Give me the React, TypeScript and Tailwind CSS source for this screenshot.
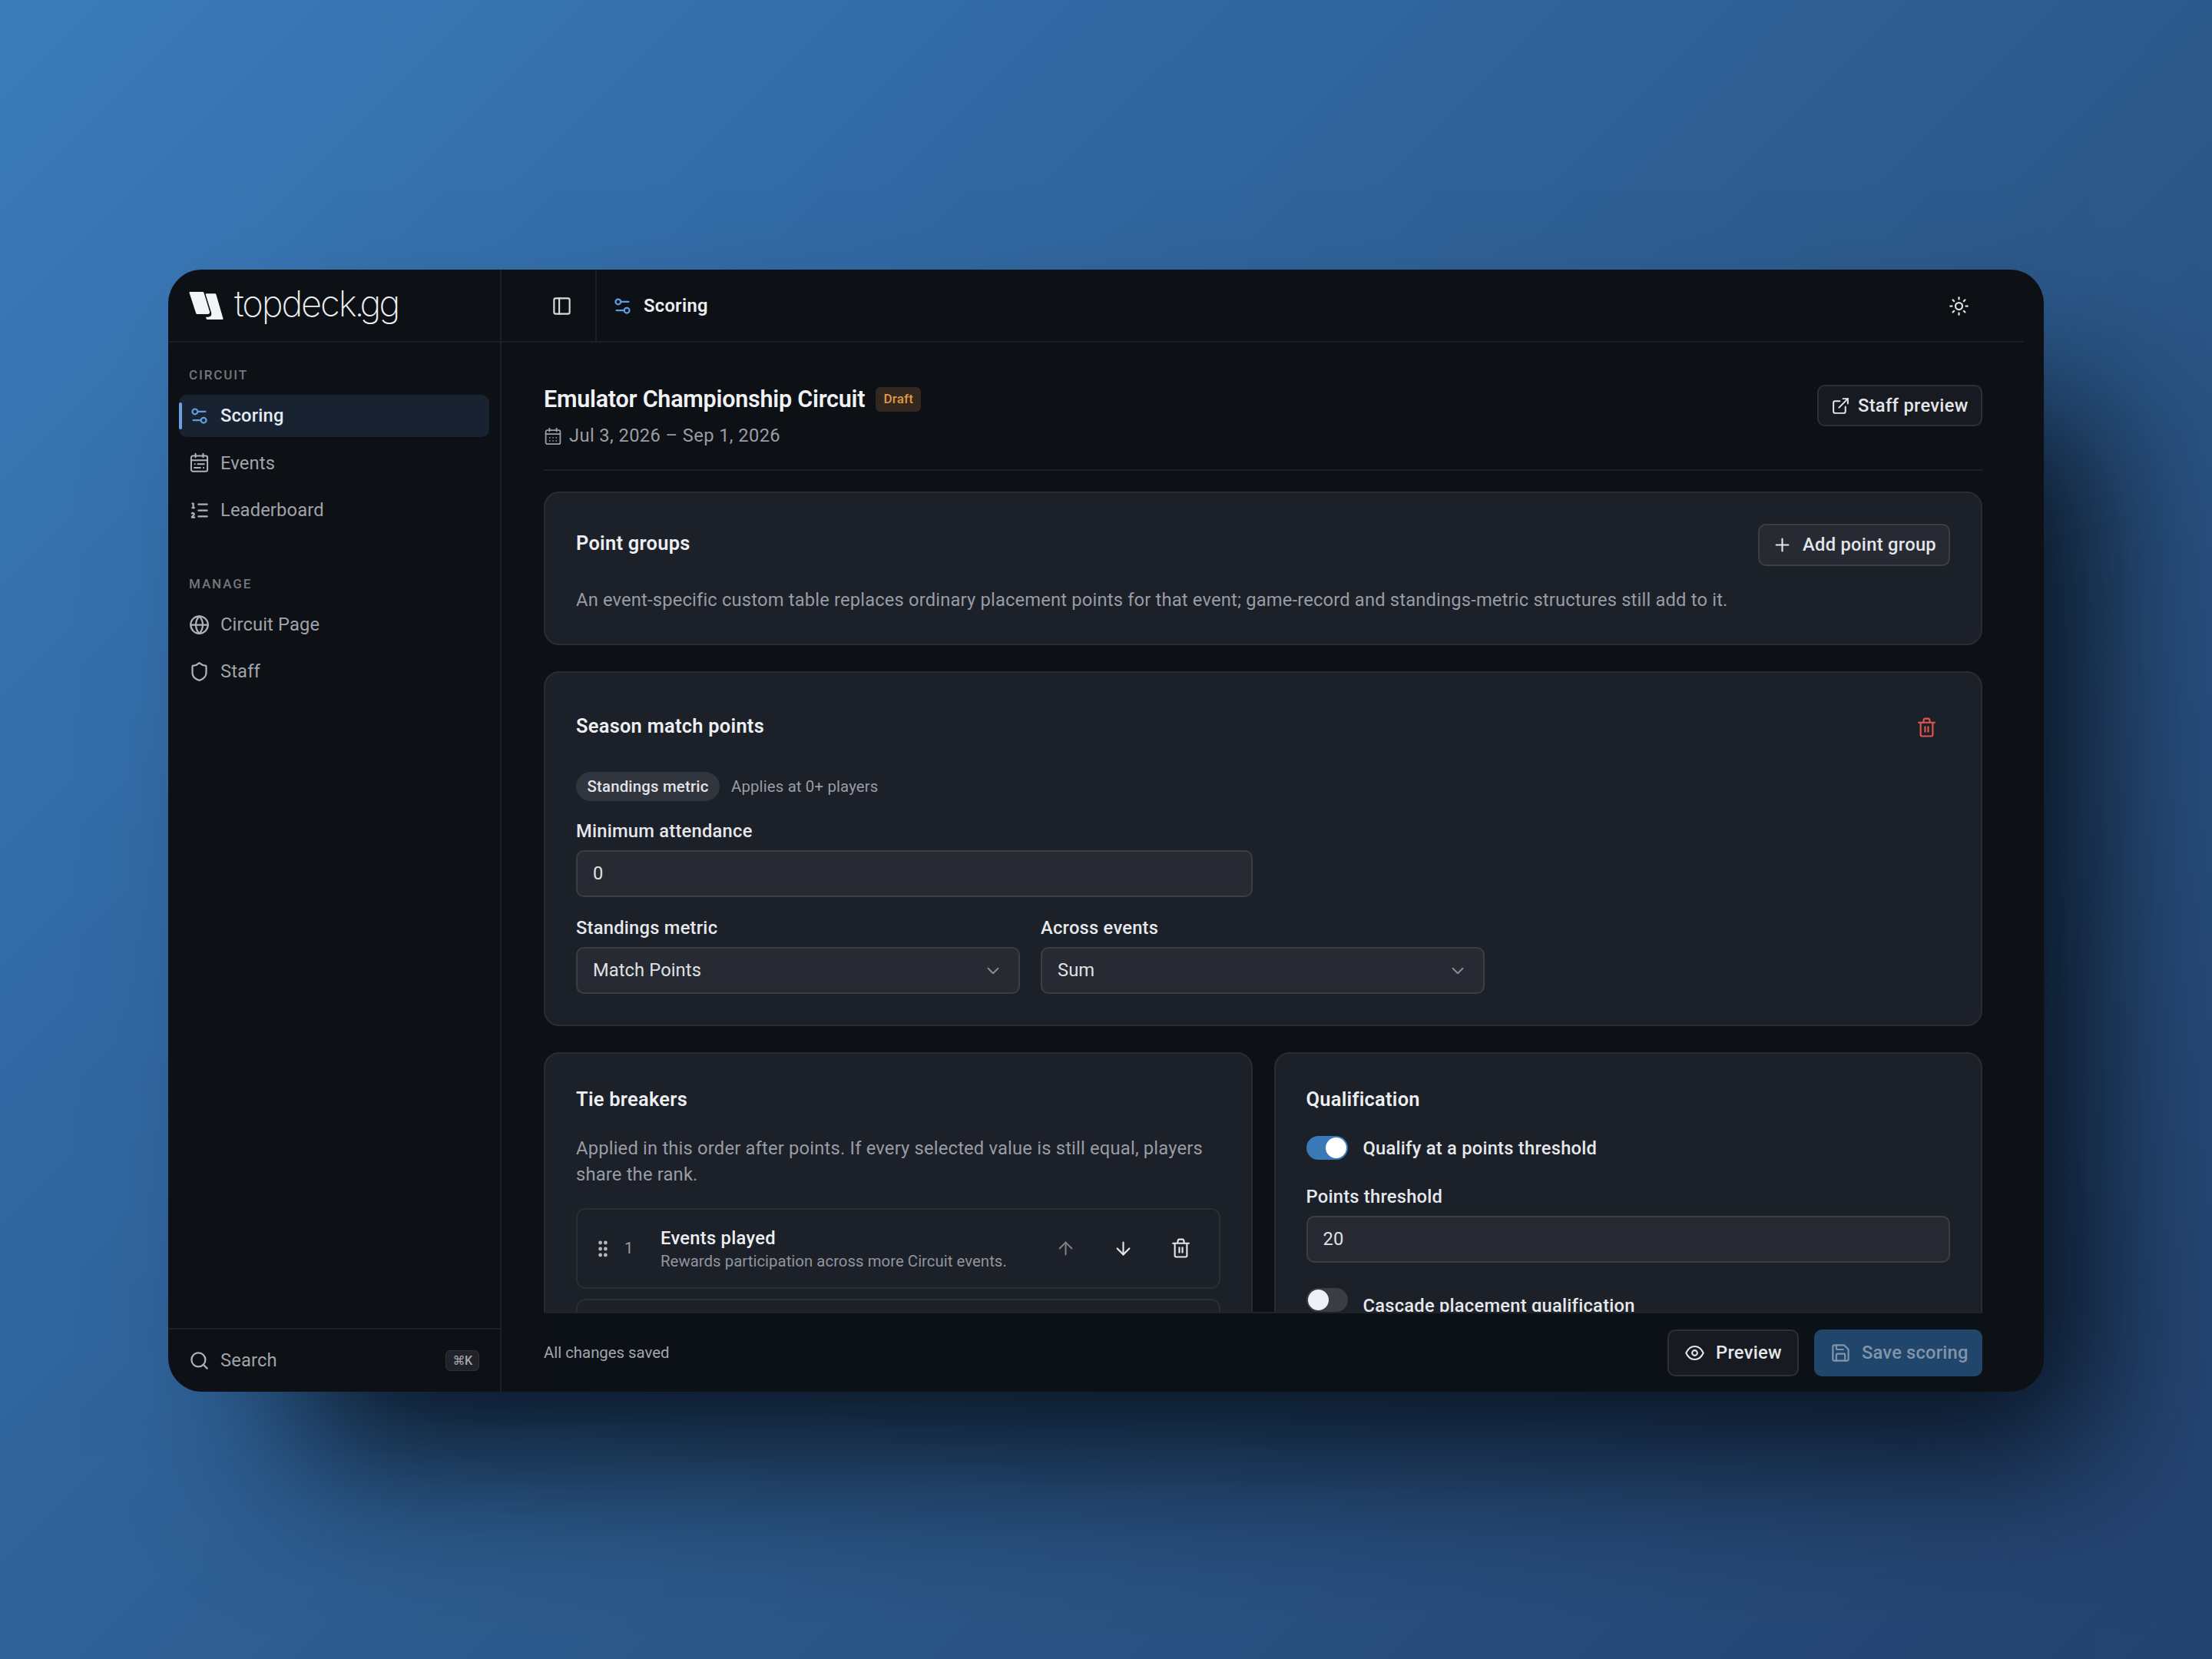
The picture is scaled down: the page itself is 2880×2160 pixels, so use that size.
import type { ReactNode } from "react";
import {
  ArrowDown, ArrowUp, ChevronDown, ExternalLink, Globe, ListOrdered,
  PanelLeft, Plus, Save, Search, Settings2, Shield, Sun,
} from "lucide-react";

type IconProps = { size?: number; className?: string };

/* Icons that lucide draws differently */
const TrashIcon = ({ size = 27, className }: IconProps) => (
  <svg width={size} height={size} viewBox="0 0 24 24" fill="none" stroke="currentColor" strokeWidth={1.9} strokeLinejoin="round" className={className}>
    <path d="M2 6h20M5 6v14.3a1.5 1.5 0 0 0 1.5 1.5h11a1.5 1.5 0 0 0 1.5-1.5V6M8.2 6l.4-3.2A1.5 1.5 0 0 1 10 1.5h4a1.5 1.5 0 0 1 1.4 1.3l.4 3.2M10.2 10.2v7.2M13.8 10.2v7.2" />
  </svg>
);

const EventsIcon = ({ size = 27, className }: IconProps) => (
  <svg width={size} height={size} viewBox="0 0 24 24" fill="none" stroke="currentColor" strokeWidth={1.8} strokeLinecap="round" className={className}>
    <rect x="2.6" y="4" width="18.8" height="18" rx="2" />
    <path d="M7.6 1.6v4M16.4 1.6v4M2.6 9.2h18.8M6.8 13.6h.1M10.2 13.6h7.4M6.2 17.8h7M16.8 17.8h.2" />
  </svg>
);

const CalendarIcon = ({ size = 24, className }: IconProps) => (
  <svg width={size} height={size} viewBox="0 0 24 24" fill="none" stroke="currentColor" strokeWidth={1.8} strokeLinecap="round" className={className}>
    <rect x="2.6" y="4.2" width="18.8" height="18" rx="2" />
    <path d="M7.4 1.6v4M16.6 1.6v4M2.6 9.2h18.8M7.8 13.8h.1M12 13.8h.1M16.2 13.8h.1M7.8 17.8h.1M12 17.8h.1M16.2 17.8h.1" />
  </svg>
);

const EyeIcon = ({ size = 27, className }: IconProps) => (
  <svg width={size} height={size} viewBox="0 0 24 24" fill="none" stroke="currentColor" strokeWidth={1.8} strokeLinejoin="round" className={className}>
    <path d="M2 12C4.2 7.2 7.8 4.4 12 4.4s7.8 2.8 10 7.6c-2.2 4.8-5.8 7.6-10 7.6S4.2 16.8 2 12Z" />
    <circle cx="12" cy="12" r="3" />
  </svg>
);

const GripIcon = () => (
  <svg width="14" height="24" viewBox="0 0 14 24" fill="currentColor">
    {[4, 12, 20].map(y => (
      <g key={y}>
        <circle cx="3.6" cy={y} r="2.4" />
        <circle cx="10.4" cy={y} r="2.4" />
      </g>
    ))}
  </svg>
);

const LogoMark = () => (
  <svg width="45" height="36" viewBox="42 45 134 108" fill="#f3f4f6">
    <path d="M45 45h50q4 0 5 4l22 72q3 10-6 11H74q-4 0-5-4L43 49q-1-4 2-4Z" />
    <path d="M109 52h34q4 0 5 4l27 93q1 4-3 4h-58q-4 0-5-4l-1-6h10q14-2 11-16l-22-71q-1-4 2-4Z" />
  </svg>
);

const NAV = [
  {
    section: "CIRCUIT",
    items: [
      { label: "Scoring", icon: Settings2, active: true },
      { label: "Events", icon: EventsIcon },
      { label: "Leaderboard", icon: ListOrdered },
    ],
  },
  {
    section: "MANAGE",
    items: [
      { label: "Circuit Page", icon: Globe },
      { label: "Staff", icon: Shield },
    ],
  },
];

function Sidebar() {
  return (
    <aside className="flex w-[434px] shrink-0 flex-col border-r-2 border-[#1d2126]">
      <div className="flex h-[95px] shrink-0 items-start gap-[14px] border-b-2 border-[#1b1f24] pl-[27px] pt-[29px]">
        <LogoMark />
        <div className="-mt-[13px] flex font-['Inter'] text-[47px] font-extralight leading-[56px] text-[#eceef1]">
          <span className="tracking-[-2.1px]">topdeck</span>
          <span className="-ml-px -mr-[6px]">.</span>
          <span className="tracking-[-2.8px]">gg</span>
        </div>
      </div>

      <nav className="flex flex-1 flex-col pl-[14px] pr-[14px] pt-[31px]">
        {NAV.map(({ section, items }) => (
          <div key={section} className="mb-[57px]">
            <div className="mb-[14px] pl-[13px] text-[17px] font-medium leading-[23px] tracking-[1.9px] text-[#74777d]">{section}</div>
            <div className="flex flex-col gap-[6.3px]">
              {items.map(item => {
                const Icon = item.icon;
                const active = "active" in item;
                return (
                  <div
                    key={item.label}
                    className={`relative flex h-[55px] items-center gap-[14px] rounded-[10px] pl-[13px] text-[23.7px] ${
                      active ? "bg-[#182230] font-medium tracking-[0.2px] text-[#e4ebf5]" : "tracking-[0.15px] text-[#a0a3a9]"
                    }`}
                  >
                    {active && <span className="absolute left-0 top-[10px] h-[35px] w-[3.5px] rounded-full bg-[#65a1e8]" />}
                    <Icon size={27} className={active ? "text-[#5f9ce2]" : "text-[#b0b2b8]"} />
                    <span className="pt-px">{item.label}</span>
                  </div>
                );
              })}
            </div>
          </div>
        ))}
      </nav>

      <div className="flex h-[83px] shrink-0 items-center gap-[14px] border-t-2 border-[#1d2126] pl-[27px] pr-[27px] text-[23.7px] tracking-[0.15px] text-[#a0a3a9]">
        <Search size={27} className="text-[#b0b2b8]" />
        <span className="flex-1 pt-px">Search</span>
        <kbd className="flex h-[27px] w-[44px] items-center justify-center rounded-[6px] border border-[#2e3238] bg-[#20242a] font-['Roboto','DejaVu_Sans',sans-serif] text-[16px] font-medium tracking-[-0.6px] text-[#a5a7ad]">⌘K</kbd>
      </div>
    </aside>
  );
}

function Card({ className = "", children }: { className?: string; children: ReactNode }) {
  return (
    <section className={`flex flex-col rounded-[20px] border-2 border-[#292d33] bg-[#1c2028] px-[40px] ${className}`}>
      {children}
    </section>
  );
}

function CardTitle({ className = "", children }: { className?: string; children: ReactNode }) {
  return <h2 className={`text-[25.4px] font-semibold leading-[34px] tracking-[0.28px] text-[#eceef1] ${className}`}>{children}</h2>;
}

function FieldLabel({ children }: { children: ReactNode }) {
  return <label className="text-[23.7px] font-medium leading-[34px] tracking-[0.25px] text-[#e6e8ec]">{children}</label>;
}

function Field({ value, select = false }: { value: string; select?: boolean }) {
  return (
    <div className="mt-[8px] flex h-[61px] items-center justify-between rounded-[10px] border-2 border-[#3a3e45] bg-[#272a32] px-[20px] text-[23.7px] tracking-[0.1px] text-[#dfe1e5]">
      <span className="pt-px">{value}</span>
      {select && <ChevronDown size={26} strokeWidth={1.7} className="text-[#8b8f97]" />}
    </div>
  );
}

function Toggle({ on = false }: { on?: boolean }) {
  return (
    <span className={`flex h-[31px] w-[54px] shrink-0 items-center rounded-full px-[2px] ${on ? "justify-end bg-[#3a79b8]" : "bg-[#3a3d43]"}`}>
      <span className={`size-[27px] rounded-full ${on ? "bg-white" : "bg-[#eef1f8]"}`} />
    </span>
  );
}

export default function App() {
  return (
    <div className="flex h-[2160px] w-[2880px] overflow-hidden bg-[linear-gradient(135deg,#3b7cba_0%,#3269a4_28%,#2d5b8d_55%,#24426f_100%)] pl-[219px] pt-[351px] font-['Roboto','Liberation_Sans',sans-serif]">
      <div className="flex h-[1461px] w-[2442px] overflow-hidden rounded-[44px] bg-[#0d1015] shadow-[115px_130px_190px_-50px_rgba(4,11,20,0.92)]">
        <Sidebar />

        <main className="flex min-w-0 flex-1 flex-col">
          <header className="mr-[27px] flex h-[95px] shrink-0 items-center border-b-2 border-[#1b1f24] pl-[54px] pr-[70px]">
            <div className="flex size-[48px] items-center justify-center pt-[2px] text-[#d9dbdf]">
              <PanelLeft size={27} strokeWidth={1.9} />
            </div>
            <div className="ml-[20px] h-full w-[2px] bg-[#1d2126]" />
            <div className="flex flex-1 items-center gap-[14px] pl-[20px] pt-[2px]">
              <Settings2 size={27} className="text-[#5f9ce2]" />
              <span className="flex-1 text-[23.7px] font-semibold tracking-[0.3px] text-[#eceef1]">Scoring</span>
              <Sun size={27} className="text-[#dcdee2]" />
            </div>
          </header>

          <div className="flex min-h-0 flex-1 flex-col overflow-hidden pl-[55px] pr-[80px] pt-[54px]">
            {/* Circuit heading */}
            <div className="flex h-[113px] shrink-0 justify-between border-b-2 border-[#1d2126]">
              <div>
                <div className="flex h-[40px] items-center gap-[14px]">
                  <h1 className="text-[30.5px] font-semibold tracking-[-0.23px] text-[#f0f1f4]">Emulator Championship Circuit</h1>
                  <span className="flex h-[32px] w-[59px] items-center justify-center rounded-[6px] bg-[#32281f] text-[17px] font-medium tracking-[0.2px] text-[#e09a45]">Draft</span>
                </div>
                <div className="mt-[11px] flex h-[34px] items-center gap-[9px] text-[23.7px] tracking-[0.4px] text-[#9a9da4]">
                  <CalendarIcon />
                  Jul 3, 2026 – Sep 1, 2026
                </div>
              </div>
              <button className="mt-px flex h-[54px] w-[215px] items-center gap-[10px] rounded-[10px] border-2 border-[#2d3036] bg-[#171a20] pl-[16px] text-[23.7px] font-medium tracking-[0.3px] text-[#e4e6ea]">
                <ExternalLink size={25} strokeWidth={1.9} />
                <span className="pt-px">Staff preview</span>
              </button>
            </div>

            <Card className="mt-[27px] h-[200px] shrink-0 pt-[40px]">
              <div className="flex h-[55px] items-center justify-between">
                <CardTitle className="mb-[6px]">Point groups</CardTitle>
                <button className="flex h-[55px] w-[250px] items-center gap-[13px] rounded-[10px] border-2 border-[#3a3e45] bg-[#272a32] pl-[16px] text-[23.7px] font-medium tracking-[0.3px] text-[#e4e6ea]">
                  <Plus size={27} strokeWidth={1.9} />
                  <span className="pt-px">Add point group</span>
                </button>
              </div>
              <p className="mt-[27px] whitespace-nowrap text-[23.7px] leading-[34px] tracking-[0.19px] text-[#999ca4]">
                An event-specific custom table replaces ordinary placement points for that event; game-record and standings-metric structures still add to it.
              </p>
            </Card>

            <Card className="mt-[34px] h-[462px] shrink-0 pt-[43px]">
              <div className="flex h-[56px] items-center justify-between pr-[17px]">
                <CardTitle className="mb-[4px]">Season match points</CardTitle>
                <TrashIcon className="text-[#e5544e]" />
              </div>
              <div className="mt-[30px] flex h-[38px] items-center gap-[15px] text-[20.35px]">
                <span className="flex h-[38px] w-[187px] items-center justify-center rounded-full bg-[#31353d] font-medium tracking-[0.2px] text-[#e2e4e8]">Standings metric</span>
                <span className="tracking-[0.16px] text-[#999ca4]">Applies at 0+ players</span>
              </div>
              <div className="mt-[22px] flex w-[881px] flex-col">
                <FieldLabel>Minimum attendance</FieldLabel>
                <Field value="0" />
              </div>
              <div className="mt-[23px] flex gap-[27px]">
                <div className="flex w-[578px] flex-col">
                  <FieldLabel>Standings metric</FieldLabel>
                  <Field value="Match Points" select />
                </div>
                <div className="flex w-[578px] flex-col">
                  <FieldLabel>Across events</FieldLabel>
                  <Field value="Sum" select />
                </div>
              </div>
            </Card>

            <div className="mt-[34px] grid shrink-0 grid-cols-2 gap-[28px]">
              <Card className="h-[600px] pt-[42px]">
                <CardTitle>Tie breakers</CardTitle>
                <p className="mt-[30px] whitespace-nowrap text-[23.7px] leading-[34px] tracking-[0.21px] text-[#999ca4]">
                  Applied in this order after points. If every selected value is still equal, players<br />share the rank.
                </p>
                <div className="mt-[27px] flex h-[105px] shrink-0 items-center rounded-[12px] border-2 border-[#292d34] pl-[26px] pr-[36px] text-[#e4e6ea]">
                  <span className="text-[#b4b7bd]"><GripIcon /></span>
                  <span className="ml-[21px] w-[47px] text-[20.35px] text-[#999ca4]">1</span>
                  <div className="flex flex-1 flex-col">
                    <span className="text-[23.7px] font-medium leading-[32px] tracking-[0.3px] text-[#eceef1]">Events played</span>
                    <span className="whitespace-nowrap text-[20.35px] leading-[28px] tracking-[0.04px] text-[#92959d]">Rewards participation across more Circuit events.</span>
                  </div>
                  <div className="flex items-center gap-[48px]">
                    <ArrowUp size={27} strokeWidth={1.8} className="text-[#7f828a]" />
                    <ArrowDown size={27} strokeWidth={1.9} />
                    <TrashIcon />
                  </div>
                </div>
                <div className="mt-[13px] h-[105px] shrink-0 rounded-[12px] border-2 border-[#292d34]" />
              </Card>

              <Card className="h-[600px] pt-[42px]">
                <CardTitle>Qualification</CardTitle>
                <div className="mt-[31px] flex h-[31px] items-center gap-[20px]">
                  <Toggle on />
                  <FieldLabel>Qualify at a points threshold</FieldLabel>
                </div>
                <div className="mt-[31px] flex flex-col">
                  <FieldLabel>Points threshold</FieldLabel>
                  <Field value="20" />
                </div>
                <div className="mt-[33px] flex gap-[20px]">
                  <Toggle />
                  <div className="pt-[6px]"><FieldLabel>Cascade placement qualification</FieldLabel></div>
                </div>
              </Card>
            </div>
          </div>

          <footer className="ml-[55px] mr-[80px] flex h-[104px] shrink-0 items-start border-t-2 border-[#1f2328] bg-[#0c1017] pt-[21px]">
            <span className="flex-1 text-[20.35px] leading-[60px] text-[#a3a6ac]">All changes saved</span>
            <button className="flex h-[61px] w-[171px] items-center gap-[14px] rounded-[10px] border-2 border-[#2d3036] bg-[#171a20] pl-[20px] text-[23.7px] font-medium tracking-[0.3px] text-[#e4e6ea]">
              <EyeIcon />
              Preview
            </button>
            <button className="ml-[20px] flex h-[61px] w-[219px] items-center gap-[14px] rounded-[10px] bg-[#20466c] pl-[21px] text-[23.7px] font-medium tracking-[0.2px] text-[#8195aa]">
              <Save size={27} strokeWidth={1.9} />
              Save scoring
            </button>
          </footer>
        </main>
      </div>
    </div>
  );
}
